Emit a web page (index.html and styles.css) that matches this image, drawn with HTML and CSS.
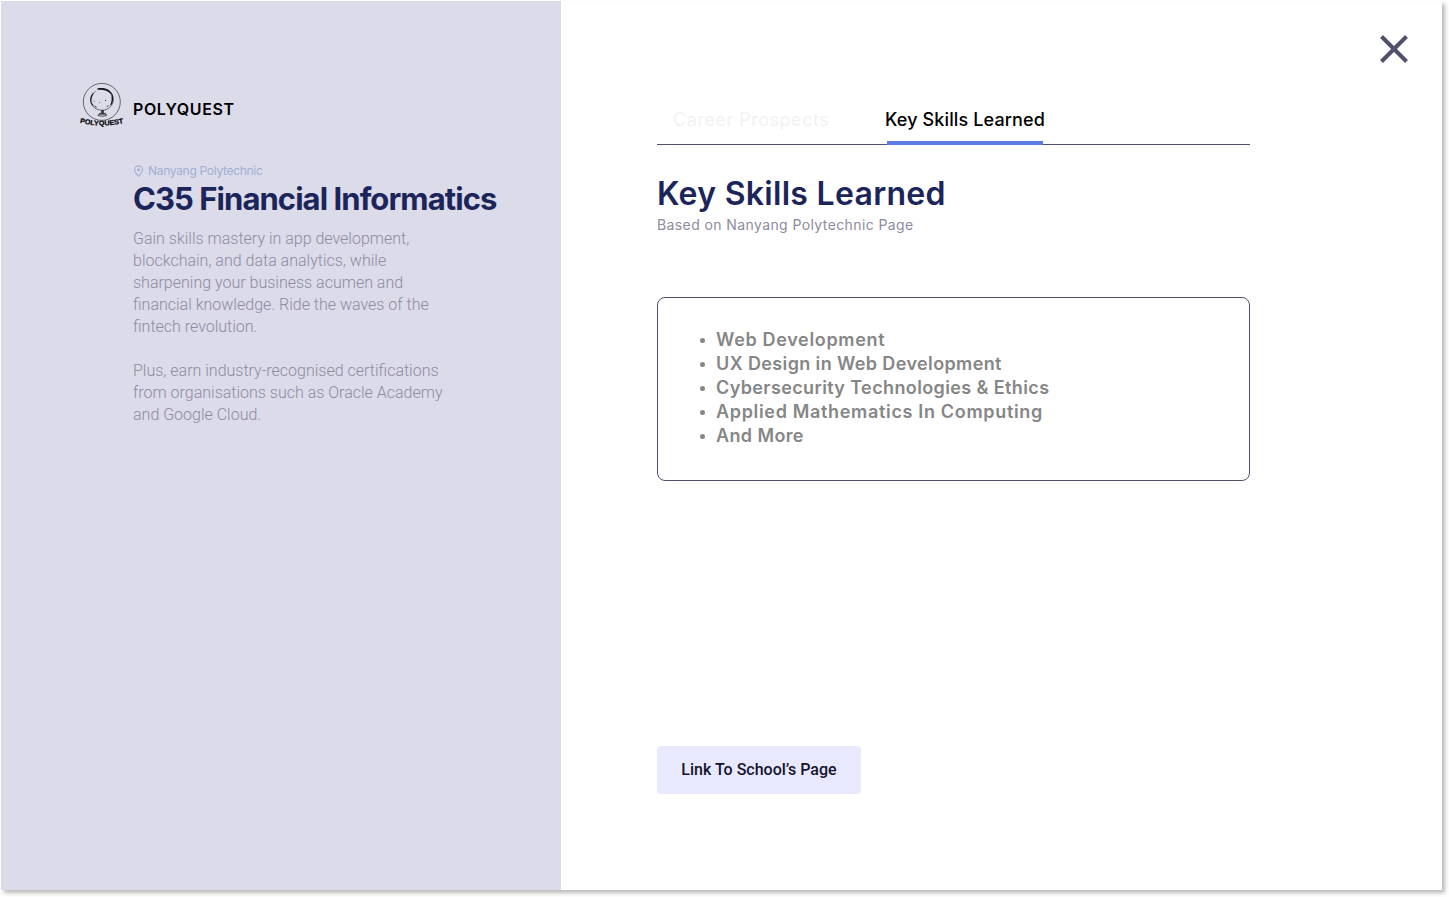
FILE: index.html
```html
<!DOCTYPE html>
<html lang="en">
<head>
<meta charset="utf-8">
<title>PolyQuest</title>
<link rel="stylesheet" href="styles.css">
</head>
<body>
<main class="page">
  <aside class="course">
    <div class="brand">
      <svg class="logo" viewBox="0 0 46 46">
        <circle cx="22.800" cy="19.900" r="18.500" fill="none" stroke="#55555f" stroke-width=".9"/>
        <path d="M16.500 9.500C12.500 12 10.800 16 11.800 20.500c1.200 4.500 6 7.500 10.500 7.700 7 .3 11.700-4.500 12-10.200.2-6-4-10.500-10-11.500" fill="none" stroke="#4a4a52" stroke-width=".8"/>
        <path d="M18.500 6.300c6-1.300 12.500.5 15 6.200l-1.500-.3c-3-3.600-7.500-4.900-13.500-4.500zM32 11.500l1.700 1.300c1 3.500.6 7-1.200 10l-1.500.7c1.800-3.500 2.200-7.500 1-12zM13.500 11.500l1.300-.5-2 4.500-.4 4.500 2.400 4-1.600-.8c-2.500-3.400-2.500-8 .3-11.700z" fill="#18181c"/>
        <path d="M22.200 28h2.600v4.500h-2.600z" fill="#333"/>
        <path d="M14.800 18.800l.8.800M20.300 20.800l.9-.5M26 18.500h1M15.500 24l2 1.200M29.500 23.500l-1.800 1.300" fill="none" stroke="#222" stroke-width=".9"/>
        <path d="M20 31.400h7M18.800 33.200c2-1.800 7-1.800 9 0-2 1.300-7 1.300-9 0z" fill="none" stroke="#333" stroke-width=".9"/>
        <path id="arc" d="M.7 40.700Q23 46.500 46 40.700" fill="none"/>
        <text class="logo-text"><textPath href="#arc" textLength="44.500" lengthAdjust="spacingAndGlyphs">POLYQUEST</textPath></text>
      </svg>
      <span class="brand-name">POLYQUEST</span>
    </div>
    <div class="course-info">
      <div class="school">
        <svg class="pin" viewBox="0 0 10 12"><path d="M5.600 11.300C3.600 8.900 1.600 7 1.600 4.900a4 4 0 0 1 8 0c0 2.100-2 4-4 6.400z" fill="none" stroke="currentColor" stroke-width="1.100"/><circle cx="5.600" cy="4.800" r="1.500" fill="currentColor"/></svg>
        <span class="school-name">Nanyang Polytechnic</span>
      </div>
      <h1 class="course-title">C35 Financial Informatics</h1>
      <p class="course-text">Gain skills mastery in app development,<br>blockchain, and data analytics, while<br>sharpening your business acumen and<br>financial knowledge. Ride the waves of the<br>fintech revolution.</p>
      <p class="course-text">Plus, earn industry-recognised certifications<br>from organisations such as Oracle Academy<br>and Google Cloud.</p>
    </div>
  </aside>
  <section class="details">
    <svg class="close" viewBox="0 0 28 28"><path d="M1.500 1.500l25 25M26.500 1.500l-25 25" stroke="#514f6e" stroke-width="4"/></svg>
    <nav class="tabs">
      <span class="tab">Career Prospects</span>
      <span class="tab active">Key Skills Learned</span>
    </nav>
    <h2 class="heading">Key Skills Learned</h2>
    <p class="source">Based on Nanyang Polytechnic Page</p>
    <ul class="skills">
      <li class="wide">Web Development</li>
      <li>UX Design in Web Development</li>
      <li>Cybersecurity Technologies &amp; Ethics</li>
      <li class="wide">Applied Mathematics In Computing</li>
      <li>And More</li>
    </ul>
    <a class="link">Link To School’s Page</a>
  </section>
</main>
</body>
</html>
```
FILE: styles.css
```css
* { box-sizing: border-box; margin: 0; padding: 0; }
body { height: 897px; padding: 1px; background: #fff; font-family: Inter, sans-serif; }
.page { display: flex; width: 1441px; height: 889px; background: #fff; box-shadow: 3px 3px 4px rgba(0, 0, 0, .27); }
.course { width: 560px; padding: 81px 0 0 78px; background: #dcdbe9; }
.brand { display: flex; align-items: center; height: 46px; }
.logo { width: 46px; height: 46px; overflow: visible; }
.logo-text { font: 700 7px "Liberation Sans", sans-serif; fill: #000; stroke: #000; stroke-width: .2px; }
.brand-name { margin: 8px 0 0 8px; font-size: 16px; font-weight: 600; letter-spacing: .62px; color: #000; }
.course-info { padding: 35px 0 0 54px; }
.school { display: flex; align-items: center; height: 16px; font-size: 12px; letter-spacing: -.3px; color: #a1afd4; }
.school-name { margin-top: -1px; }
.pin { width: 10px; height: 12px; margin-right: 5px; }
.course-title { height: 40px; font-size: 31px; line-height: 40px; font-weight: 650; letter-spacing: -.94px; color: #1b255a; white-space: nowrap; }
.course-text { margin-bottom: 22px; font: 300 16px/22px Roboto, sans-serif; color: #8d8ba1; white-space: nowrap; }
.course-title + .course-text { padding-top: 9px; }
.details { display: flex; flex-direction: column; align-items: flex-start; width: 881px; padding: 34px 34px 0 96px; }
.close { width: 28px; height: 28px; align-self: flex-end; }
.tabs { display: flex; gap: 56px; width: 593px; height: 46px; margin-top: 36px; padding-left: 16px; border-bottom: 1px solid #514f6e; font-size: 18px; line-height: 42px; letter-spacing: .52px; white-space: nowrap; }
.tab { width: 156px; height: 46px; color: #f2f2f2; }
.active { margin-left: 2px; border-bottom: 4px solid #5c7ce6; color: #000; font-weight: 500; letter-spacing: .13px; text-indent: -2px; }
.heading { margin-top: 29px; font-size: 32px; line-height: 40px; font-weight: 600; letter-spacing: .3px; color: #1b255a; }
.source { font-size: 14px; line-height: 22px; letter-spacing: .4px; color: #8d8ba1; }
.skills { width: 593px; height: 184px; margin-top: 61px; padding: 30px 0 0 58px; border: 1px solid #514f6e; border-radius: 8px; list-style: none; font-size: 18px; line-height: 24px; font-weight: 600; letter-spacing: .38px; color: #868686; }
.skills .wide { letter-spacing: .67px; }
.skills li::before { content: ""; display: inline-block; width: 5px; height: 5px; margin: 0 11px 3px -16px; border-radius: 50%; background: #868686; }
.link { display: flex; justify-content: center; align-items: center; width: 204px; height: 48px; margin-top: 265px; border-radius: 4px; background: #e8e9ff; font: 500 16px/24px Roboto, sans-serif; color: #14142b; }
```
